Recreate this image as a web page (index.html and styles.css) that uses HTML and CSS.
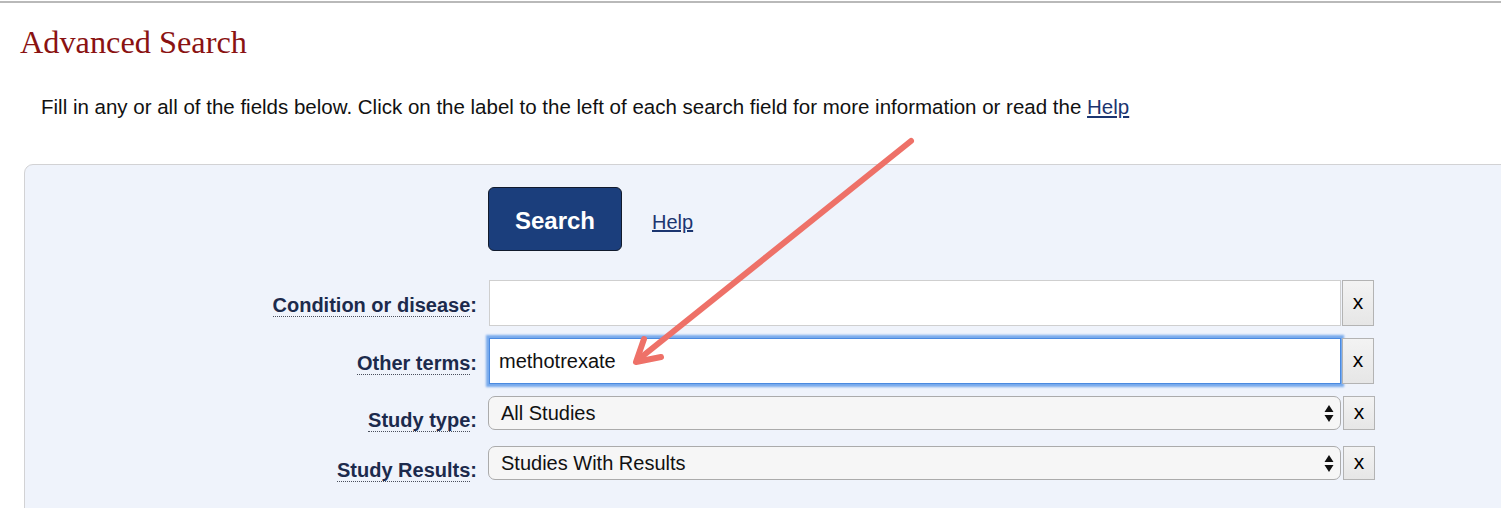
FILE: index.html
```html
<!DOCTYPE html>
<html lang="en">
<head>
<meta charset="utf-8">
<title>Advanced Search</title>
<link rel="stylesheet" href="styles.css">
</head>
<body>
<div class="topline"></div>
<h1 class="title">Advanced Search</h1>
<p class="intro">Fill in any or all of the fields below. Click on the label to the left of each search field for more information or read the <a href="#" class="link">Help</a></p>

<div class="panel">
  <div class="row row-actions">
    <div class="label-cell"></div>
    <div class="field-cell">
      <button class="search-btn" type="button">Search</button>
      <a href="#" class="link help-link">Help</a>
    </div>
  </div>

  <div class="row row-input">
    <div class="label-cell"><span class="lbl">Condition or disease</span>:</div>
    <div class="field-cell">
      <div class="text-input"></div>
      <div class="clear-btn clear-tall">x</div>
    </div>
  </div>

  <div class="row row-input row-gap">
    <div class="label-cell"><span class="lbl">Other terms</span>:</div>
    <div class="field-cell">
      <div class="text-input focused">methotrexate</div>
      <div class="clear-btn clear-tall">x</div>
    </div>
  </div>

  <div class="row row-select row-gap">
    <div class="label-cell"><span class="lbl">Study type</span>:</div>
    <div class="field-cell">
      <div class="select-box"><span>All Studies</span>
        <svg class="updown" width="10" height="17" viewBox="0 0 10 17"><path d="M5 0 L9.5 7 L0.5 7 Z M5 17 L9.5 10 L0.5 10 Z" fill="#111"/></svg>
      </div>
      <div class="clear-btn clear-short">x</div>
    </div>
  </div>

  <div class="row row-select row-gap-lg">
    <div class="label-cell"><span class="lbl">Study Results</span>:</div>
    <div class="field-cell">
      <div class="select-box"><span>Studies With Results</span>
        <svg class="updown" width="10" height="17" viewBox="0 0 10 17"><path d="M5 0 L9.5 7 L0.5 7 Z M5 17 L9.5 10 L0.5 10 Z" fill="#111"/></svg>
      </div>
      <div class="clear-btn clear-short">x</div>
    </div>
  </div>
</div>

<svg class="annot" width="1501" height="508" viewBox="0 0 1501 508">
  <line x1="911" y1="141" x2="639" y2="359" stroke="#ee7168" stroke-width="6" stroke-linecap="round"/>
  <polyline points="644,339 636,362 661,357" fill="none" stroke="#ee7168" stroke-width="6" stroke-linecap="round" stroke-linejoin="round"/>
</svg>
</body>
</html>
```

FILE: styles.css
```css
html, body {
  margin: 0;
  padding: 0;
}
body {
  position: relative;
  overflow: hidden;
  height: 508px;
  background: #ffffff;
  padding-top: 1px;
  box-sizing: border-box;
  font-family: "Liberation Sans", Arial, sans-serif;
  color: #111;
}
.topline {
  height: 2px;
  background: #b9b9b9;
}
.title {
  margin: 21px 0 0 20px;
  font-family: "Liberation Serif", "Times New Roman", serif;
  font-weight: normal;
  font-size: 32.3px;
  line-height: 36px;
  color: #8a1212;
}
.intro {
  margin: 35px 0 0 41px;
  font-size: 20.5px;
  line-height: 24px;
  color: #111;
}
.link {
  color: #1b3570;
  text-decoration: underline;
}
.panel {
  margin: 45px -30px 0 24px;
  border: 1px solid #d2d2d4;
  border-radius: 9px;
  background: #eff3fb;
  padding: 22px 0 60px 0;
}
.row {
  display: flex;
  align-items: flex-start;
  column-gap: 11px;
}
.label-cell {
  width: 452px;
  flex: none;
  text-align: right;
  font-size: 20px;
  line-height: 24px;
  font-weight: bold;
  color: #1c2a4c;
  padding-top: 13px;
}
.row-select .label-cell {
  padding-top: 12px;
  margin-bottom: -4px;
}
.row-actions .label-cell {
  padding-top: 0;
}
.lbl {
  border-bottom: 1px dotted #4a4f5c;
}
.field-cell {
  display: flex;
  align-items: stretch;
}
.row-actions .field-cell {
  align-items: center;
}
.search-btn {
  width: 134px;
  height: 64px;
  background: #1b3e7c;
  border: 1px solid #111a2c;
  border-radius: 6px;
  color: #ffffff;
  font-family: "Liberation Sans", Arial, sans-serif;
  font-weight: bold;
  font-size: 24px;
  padding: 3px 0 0 0;
}
.help-link {
  margin-left: 30px;
  margin-top: 5px;
  font-size: 20px;
  line-height: 24px;
}
.row-input {
  margin-top: 29px;
}
.row-gap {
  margin-top: 12px;
}
.row-gap-lg {
  margin-top: 16px;
}
.row-input.row-gap {
  margin-top: 12px;
}
.text-input {
  box-sizing: border-box;
  width: 852px;
  height: 46px;
  margin-left: 1px;
  background: #ffffff;
  border: 1px solid #cfcfcf;
  padding-left: 9px;
  font-size: 20px;
  line-height: 44px;
  color: #111;
}
.text-input.focused {
  border: 1px solid #4a8ae0;
  box-shadow: 0 0 2px 3px #78aaec;
}
.clear-btn {
  box-sizing: border-box;
  width: 32px;
  margin-left: 1px;
  background: linear-gradient(#f3f3f3, #e6e6e6);
  border: 1px solid #b3b3b3;
  text-align: center;
  font-size: 21px;
  color: #000;
}
.clear-tall {
  height: 46px;
  line-height: 42px;
}
.clear-short {
  height: 34px;
  line-height: 30px;
  margin-left: 2px;
}
.select-box {
  box-sizing: border-box;
  width: 853px;
  height: 34px;
  display: flex;
  align-items: center;
  justify-content: space-between;
  padding: 0 6px 0 12px;
  background: #f6f6f6;
  border: 1px solid #ababab;
  border-radius: 7px;
  font-size: 20px;
  color: #111;
}
.updown {
  display: block;
}
.annot {
  position: absolute;
  top: 0;
  left: 0;
  pointer-events: none;
}
```
